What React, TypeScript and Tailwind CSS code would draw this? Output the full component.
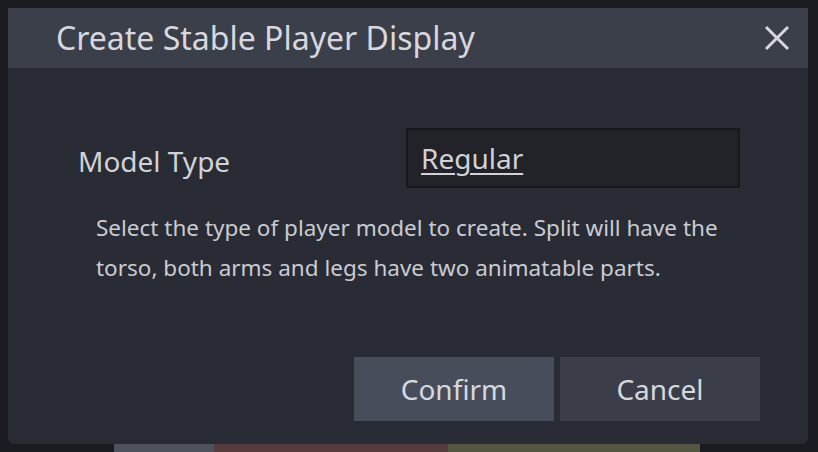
import React from 'react';

export default function App() {
  return (
    <div
      className="relative w-[818px] h-[452px] bg-[#1b1c21] overflow-hidden pt-2 pl-2"
      style={{ fontFamily: '"Noto Sans", sans-serif' }}
    >
      {/* strips of the page behind the dialog */}
      <div className="absolute left-0 bottom-0 flex h-[8px] w-full">
        <div className="ml-[114px] w-[100px] bg-[#4e525c]" />
        <div className="w-[234px] bg-[#573c3d]" />
        <div className="w-[252px] bg-[#545641]" />
      </div>

      <div className="relative flex flex-col w-[800px] h-[436px] bg-[#292c34] rounded-b-md overflow-hidden">
        <div className="flex items-center justify-between h-[60px] bg-[#3b3f4a] pl-[48px] pr-[15px]">
          <h1 className="text-[32px] leading-none text-[#d6d8de]">Create Stable Player Display</h1>
          <button className="w-[32px] h-[32px] flex items-center justify-center text-[#d6d8de]">
            <svg width="26" height="26" viewBox="0 0 26 26" fill="none" stroke="currentColor" strokeWidth="3">
              <path d="M2 2 L24 24 M24 2 L2 24" />
            </svg>
          </button>
        </div>

        <div className="flex flex-col grow px-[48px]">
          <div className="flex items-center mt-[60px]">
            <label className="w-[350px] pl-[22px] pt-[6px] text-[28px] leading-none text-[#d0d2d8]">Model Type</label>
            <div className="flex items-center w-[334px] h-[60px] bg-[#212329] border-2 border-[#17181c] px-[13px]">
              <span className="text-[28px] leading-none text-[#d0d2d8] underline underline-offset-[4px] decoration-2">Regular</span>
            </div>
          </div>

          <p className="mt-[20px] pl-[40px] pr-[20px] text-[22.5px] leading-[40px] text-[#c9cbd1]">
            Select the type of player model to create. Split will have the torso, both arms and legs have two animatable parts.
          </p>

          <div className="flex justify-end gap-[6px] mt-auto mb-[23px]">
            <button className="w-[200px] h-[64px] bg-[#474d5b] text-[28px] text-[#d6d8de]">Confirm</button>
            <button className="w-[200px] h-[64px] bg-[#3b3e49] text-[28px] text-[#d6d8de]">Cancel</button>
          </div>
        </div>
      </div>
    </div>
  );
}
